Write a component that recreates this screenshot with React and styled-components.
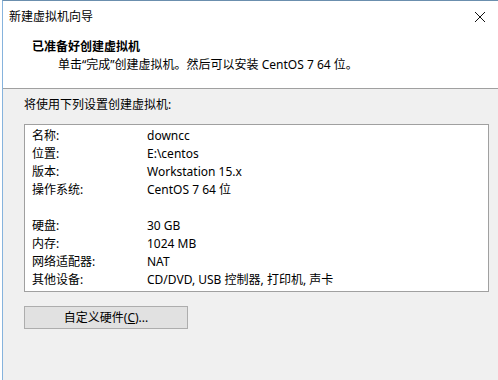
import React from 'react';
import styled, { createGlobalStyle } from 'styled-components';

const GlobalStyle = createGlobalStyle`
    html, body {
        margin: 0;
        padding: 0;
        background: #ffffff;
    }
    body {
        font-family: "Noto Sans", "Noto Sans CJK SC", sans-serif;
        font-size: 12px;
        color: #000;
    }
`;

const Window = styled.div`
    box-sizing: border-box;
    width: 496px;
    height: 380px;
    margin-left: 2px;
    border-top: 1px solid #6b8fae;
    border-left: 1px solid #86b3dd;
    display: flex;
    flex-direction: column;
    overflow: hidden;
`;

const TitleBar = styled.div`
    height: 32px;
    display: flex;
    align-items: center;
    justify-content: space-between;
    padding: 0 12px 0 6px;
    background: #fff;
    line-height: 18px;
`;

const CloseBtn = styled.button`
    border: none;
    background: transparent;
    padding: 0;
    width: 12px;
    height: 12px;
    display: flex;

    svg {
        width: 12px;
        height: 12px;
    }
`;

const Header = styled.div`
    background: #fff;
    padding: 5px 0 14px 29px;
    border-bottom: 1px solid #a0a0a0;
`;

const Heading = styled.div`
    font-weight: bold;
    line-height: 18px;
`;

const SubHeading = styled.div`
    line-height: 18px;
    padding-left: 26px;
`;

const Body = styled.div`
    flex: 1;
    background: #f0f0f0;
    padding: 7px 9px 0 21px;
`;

const Intro = styled.div`
    line-height: 18px;
`;

const SummaryBox = styled.div`
    margin-top: 10px;
    background: #fff;
    border: 1px solid #a0a0a0;
    padding: 2px 0 2px 7px;
`;

const Row = styled.div`
    display: grid;
    grid-template-columns: 115px 1fr;
    height: 18px;
    line-height: 18px;
`;

const Button = styled.button`
    margin-top: 14px;
    width: 164px;
    height: 23px;
    background: #e1e1e1;
    border: 1px solid #adadad;
    font-family: inherit;
    font-size: 12px;
    color: #000;
    padding: 0;
    line-height: 20px;

    u {
        text-decoration: underline;
    }
`;

const rows = [
    ['名称:', 'downcc'],
    ['位置:', 'E:\\centos'],
    ['版本:', 'Workstation 15.x'],
    ['操作系统:', 'CentOS 7 64 位'],
    ['', ''],
    ['硬盘:', '30 GB'],
    ['内存:', '1024 MB'],
    ['网络适配器:', 'NAT'],
    ['其他设备:', 'CD/DVD, USB 控制器, 打印机, 声卡'],
];

const App = () => {
    return (
        <>
            <GlobalStyle />
            <Window>
                <TitleBar>
                    <span>新建虚拟机向导</span>
                    <CloseBtn aria-label="close">
                        <svg viewBox="0 0 12 12">
                            <path d="M1 1L11 11M11 1L1 11" stroke="#111" strokeWidth="1" fill="none" />
                        </svg>
                    </CloseBtn>
                </TitleBar>
                <Header>
                    <Heading>已准备好创建虚拟机</Heading>
                    <SubHeading>单击“完成”创建虚拟机。然后可以安装 CentOS 7 64 位。</SubHeading>
                </Header>
                <Body>
                    <Intro>将使用下列设置创建虚拟机:</Intro>
                    <SummaryBox>
                        {rows.map(([k, v], i) => (
                            <Row key={i}>
                                <span>{k}</span>
                                <span>{v}</span>
                            </Row>
                        ))}
                    </SummaryBox>
                    <Button>自定义硬件(<u>C</u>)...</Button>
                </Body>
            </Window>
        </>
    );
};

export default App;
